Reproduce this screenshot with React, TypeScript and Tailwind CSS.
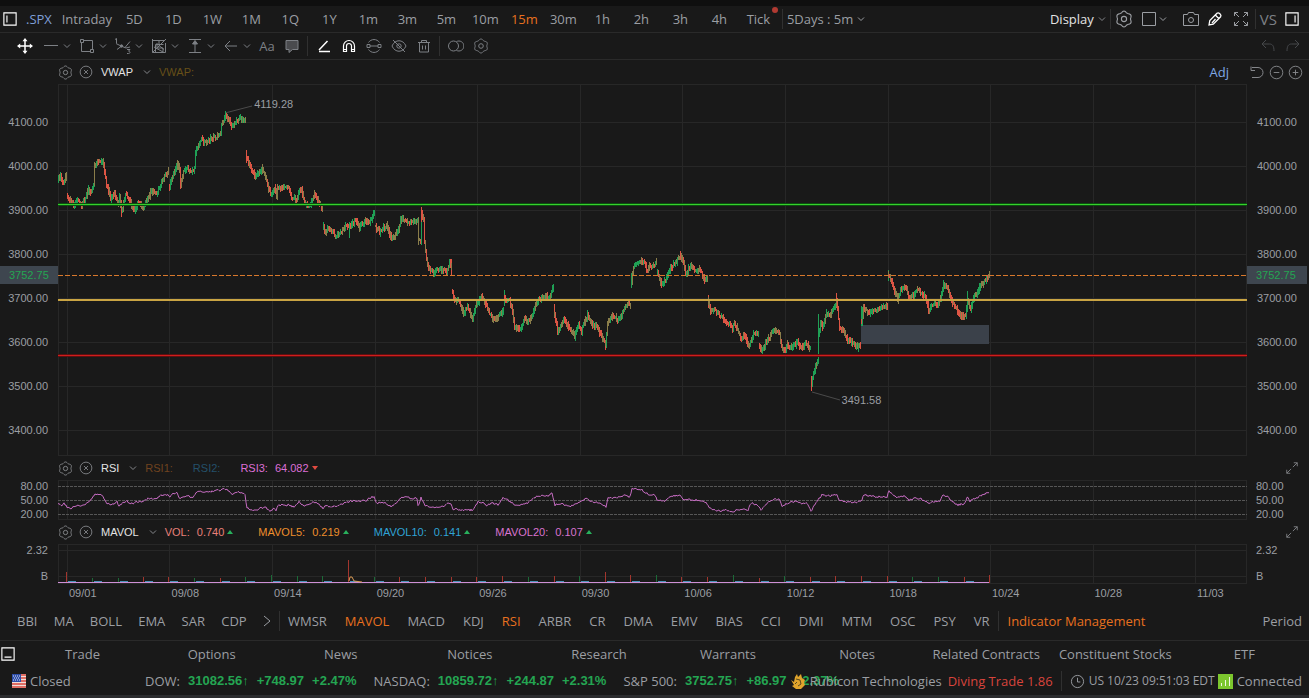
import type { ReactNode } from "react";
import clsx from "clsx";

type Point = [number, number];

const PLOT_LEFT = 58;
const PLOT_WIDTH = 1189;
const GRID_X = [67, 169, 272, 375, 477, 580, 682, 785, 888, 990, 1093, 1195];
const PRICE_TICKS = ["4100.00", "4000.00", "3900.00", "3800.00", "3700.00", "3600.00", "3500.00", "3400.00"];
const DATES = ["09/01", "09/08", "09/14", "09/20", "09/26", "09/30", "10/06", "10/12", "10/18", "10/24", "10/28", "11/03"];
const INTERVALS = ["5D", "1D", "1W", "1M", "1Q", "1Y", "1m", "3m", "5m", "10m", "15m", "30m", "1h", "2h", "3h", "4h"];
const MAIN_INDICATORS = ["BBI", "MA", "BOLL", "EMA", "SAR", "CDP"];
const SUB_INDICATORS = ["WMSR", "MAVOL", "MACD", "KDJ", "RSI", "ARBR", "CR", "DMA", "EMV", "BIAS", "CCI", "DMI", "MTM", "OSC", "PSY", "VR"];
const ACTIVE_INDICATORS = ["MAVOL", "RSI"];
const PAGES = ["Trade", "Options", "News", "Notices", "Research", "Warrants", "Notes", "Related Contracts", "Constituent Stocks", "ETF"];

// One list of closes per trading session, the gaps between lists are overnight gaps
const SESSIONS: Point[][] = [
  [[58, 180], [60, 177], [63, 184], [65, 176], [66, 179]],
  [[67, 197], [70, 202], [73, 206], [77, 200], [81, 205], [85, 198], [88, 189], [91, 191], [93, 186], [94, 166], [97, 161], [102, 161], [106, 185], [110, 199], [114, 194], [117, 202], [119, 197], [121, 212], [125, 195], [128, 197], [131, 205], [134, 211], [137, 203], [143, 208], [146, 201], [151, 191], [156, 193], [160, 185], [165, 175], [168, 172]],
  [[169, 186], [173, 173], [177, 163], [179, 170], [180, 185], [183, 172], [187, 169], [191, 171], [194, 169], [195, 153], [198, 143], [201, 140], [206, 143], [211, 138], [217, 137], [220, 133], [221, 126], [225, 116], [228, 120], [231, 126], [235, 121], [240, 119], [245, 120]],
  [[246, 156], [248, 164], [251, 170], [254, 175], [258, 173], [262, 169], [266, 180], [270, 196], [274, 188], [276, 197], [277, 188], [282, 188], [288, 188], [291, 197], [296, 201], [298, 191], [301, 190], [304, 203], [309, 206], [314, 195], [318, 201], [322, 211]],
  [[323, 227], [324, 234], [327, 227], [330, 231], [335, 235], [341, 233], [345, 225], [349, 227], [355, 220], [359, 227], [364, 222], [369, 223], [372, 215], [374, 212]],
  [[375, 226], [379, 232], [386, 226], [392, 239], [397, 232], [400, 220], [403, 219], [407, 222], [413, 221], [417, 220], [418, 240], [420, 240], [421, 214], [423, 220], [424, 243], [427, 266], [430, 270], [433, 273], [437, 270], [442, 270], [446, 272], [449, 264], [451, 267]],
  [[452, 292], [454, 300], [458, 301], [463, 313], [467, 307], [472, 318], [476, 304], [481, 296], [485, 305], [493, 320], [498, 317], [503, 310]],
  [[504, 297], [506, 302], [509, 299], [512, 312], [514, 326], [520, 329], [524, 320], [529, 322], [533, 310], [538, 299], [543, 297], [548, 298], [553, 286]],
  [[554, 314], [557, 332], [563, 319], [568, 327], [574, 336], [578, 325], [581, 332], [583, 325], [587, 314], [592, 325], [597, 328], [603, 340], [605, 344], [607, 323], [612, 315], [618, 321], [625, 306], [628, 302], [630, 307]],
  [[631, 284], [633, 267], [637, 262], [643, 262], [647, 271], [649, 265], [653, 266], [656, 261]],
  [[657, 273], [661, 284], [665, 280], [670, 268], [675, 263], [680, 255], [683, 263], [685, 275], [690, 266], [695, 270], [699, 270], [704, 279], [707, 276]],
  [[708, 301], [710, 312], [714, 309], [720, 317], [726, 322], [732, 329], [734, 324], [737, 330], [741, 340], [744, 334], [748, 346], [753, 334], [758, 333]],
  [[759, 346], [761, 352], [767, 340], [773, 329], [779, 333], [781, 348], [785, 350], [787, 344], [792, 347], [797, 343], [801, 348], [805, 343], [810, 348]],
  [[811, 384], [814, 369], [817, 360], [818, 333], [820, 322], [822, 328], [826, 314], [830, 315], [833, 308], [836, 303], [837, 310], [839, 328], [843, 330], [847, 340], [852, 343], [856, 347], [860, 345]],
  [[861, 322], [863, 308], [868, 312], [875, 310], [882, 307], [887, 307]],
  [[888, 274], [891, 280], [893, 288], [897, 300], [900, 290], [905, 287], [909, 298], [913, 295], [917, 288], [920, 293], [925, 297], [928, 311], [933, 303], [938, 305], [941, 293], [943, 285], [947, 288], [950, 298], [955, 308], [960, 316], [965, 316], [967, 298], [970, 310], [973, 297], [978, 290], [983, 283], [989, 275]],
];

// Single bars that stick out of their session: x, high, low, color
const SPIKES: [number, number, number, string][] = [
  [121, 200, 217, "#dd5544"], [94, 162, 186, "#8a7d4a"], [246, 150, 163, "#dd5544"], [349, 222, 238, "#1fa055"],
  [418, 217, 245, "#8a7d4a"], [421, 207, 222, "#dd5544"], [451, 259, 275, "#dd5544"], [554, 304, 318, "#dd5544"],
  [605, 340, 350, "#dd5544"], [631, 273, 287, "#1fa055"], [708, 295, 308, "#dd5544"], [811, 376, 391, "#dd5544"],
  [818, 314, 356, "#1fa055"], [836, 293, 308, "#dd5544"], [861, 306, 326, "#1fa055"], [888, 270, 281, "#1fa055"],
  [967, 291, 304, "#1fa055"], [504, 290, 306, "#1fa055"], [862, 307, 326, "#1fa055"], [680, 251, 260, "#dd5544"],
];

const RSI_POINTS: Point[] = [
  [58, 504], [62, 506], [64, 503], [67, 507], [70, 509], [74, 506], [80, 506], [86, 504], [92, 499], [95, 494], [98, 494], [102, 495], [105, 501], [108, 504], [114, 504], [117, 502], [119, 506], [123, 503], [127, 501], [131, 504], [137, 502], [143, 502], [148, 498], [155, 499], [162, 495], [168, 495], [170, 497], [173, 494], [177, 493], [180, 499], [183, 497], [188, 496], [193, 498], [196, 493], [200, 491], [208, 492], [215, 491], [221, 490], [224, 489], [228, 490], [232, 494], [237, 492], [241, 493], [245, 495], [247, 508], [253, 510], [257, 511], [260, 508], [265, 507], [270, 512], [274, 508], [276, 510], [278, 505], [288, 505], [294, 507], [299, 502], [305, 506], [309, 504], [314, 502], [320, 505], [323, 508], [325, 505], [330, 507], [338, 506], [346, 502], [352, 501], [358, 501], [365, 501], [372, 497], [374, 497], [376, 503], [382, 502], [391, 506], [397, 502], [402, 497], [410, 498], [417, 498], [418, 506], [421, 498], [425, 505], [430, 507], [443, 507], [448, 503], [451, 504], [453, 509], [463, 510], [473, 510], [478, 502], [484, 503], [487, 506], [492, 503], [498, 505], [503, 498], [508, 500], [513, 504], [520, 505], [528, 503], [533, 498], [540, 496], [548, 496], [552, 493], [555, 505], [562, 504], [570, 506], [575, 505], [582, 501], [587, 498], [590, 501], [598, 503], [604, 505], [606, 507], [608, 498], [617, 498], [625, 495], [630, 497], [632, 489], [642, 490], [648, 494], [655, 495], [657, 500], [665, 501], [672, 496], [680, 495], [684, 500], [697, 500], [706, 502], [709, 508], [720, 511], [727, 510], [732, 512], [738, 509], [748, 510], [751, 503], [757, 505], [761, 510], [767, 503], [775, 499], [780, 500], [782, 506], [788, 503], [795, 501], [802, 503], [807, 503], [811, 511], [814, 506], [818, 500], [822, 495], [830, 496], [837, 494], [839, 501], [847, 502], [856, 502], [861, 501], [864, 495], [870, 496], [880, 497], [887, 497], [889, 491], [896, 497], [905, 496], [909, 500], [915, 498], [921, 499], [929, 503], [940, 501], [943, 495], [948, 497], [952, 502], [958, 505], [965, 503], [967, 497], [970, 501], [980, 496], [989, 492],
];

const VOLUME_BARS: [number, number, boolean][] = [
  [66, 11, false], [92, 5, true], [118, 5, true], [143, 6, false], [168, 6, false], [194, 5, true], [220, 5, false], [245, 6, true], [271, 8, true], [297, 7, true], [322, 7, true], [348, 23, false], [374, 6, true], [399, 6, false], [425, 6, false], [451, 6, false], [476, 6, false], [502, 7, false], [528, 6, true], [554, 7, false], [579, 7, true], [605, 11, false], [630, 8, false], [656, 8, true], [681, 6, false], [707, 6, false], [733, 8, true], [759, 5, false], [784, 7, true], [810, 6, false], [835, 7, false], [861, 7, false], [887, 7, false], [912, 6, true], [938, 6, true], [964, 6, false], [989, 8, false],
];

const random = (seed: number) => {
  let s = seed;
  return () => {
    s = (s * 1664525 + 1013904223) % 4294967296;
    return s / 4294967296;
  };
};

const valueAt = (points: Point[], x: number) => {
  for (let i = 1; i < points.length; i++) {
    const [x0, y0] = points[i - 1];
    const [x1, y1] = points[i];
    if (x <= x1) return y0 + ((y1 - y0) * (x - x0)) / (x1 - x0);
  }
  return points[points.length - 1][1];
};

const buildCandles = () => {
  const rnd = random(7);
  const paths: Record<string, string> = { "#1fa055": "", "#dd5544": "", "#8a7d4a": "" };
  SESSIONS.forEach((points) => {
    const end = points[points.length - 1][0];
    let prev = points[0][1];
    for (let x = points[0][0]; x <= end; x++) {
      const y = valueAt(points, x) + (rnd() - 0.5) * 3;
      const move = y - prev;
      const top = Math.round(Math.min(y, prev) - 1 - rnd() * 3);
      const bottom = Math.round(Math.max(y, prev) + 1 + rnd() * 3);
      const pick = rnd();
      let color = "#8a7d4a";
      if (pick > 0.35) color = move > 0 ? "#dd5544" : "#1fa055";
      paths[color] += `M${x - PLOT_LEFT + 0.5} ${top - 84}V${bottom - 84}`;
      prev = y;
    }
  });
  SPIKES.forEach(([x, top, bottom, color]) => {
    paths[color] += `M${x - PLOT_LEFT + 0.5} ${top - 84}V${bottom - 84}`;
  });
  return Object.entries(paths);
};

const buildRsi = () => {
  const rnd = random(21);
  let d = "";
  for (let x = 58; x <= 989; x++) {
    const y = valueAt(RSI_POINTS, x) - 480 + (rnd() - 0.5) * 2;
    d += `${d ? "L" : "M"}${x - PLOT_LEFT} ${y.toFixed(1)}`;
  }
  return d;
};

const buildGear = () => {
  let d = "";
  for (let i = 0; i < 72; i++) {
    const a = (i * Math.PI) / 36;
    const r = 6.4 + 0.6 * Math.cos(6 * a);
    d += `${d ? "L" : "M"}${(8 + r * Math.sin(a)).toFixed(2)} ${(8 - r * Math.cos(a)).toFixed(2)}`;
  }
  return `${d}Z`;
};

const CANDLES = buildCandles();
const RSI_PATH = buildRsi();
const GEAR_PATH = buildGear();

interface IconProps {
  children: ReactNode;
  className?: string;
}

const Icon = ({ children, className = "size-4" }: IconProps) => (
  <svg viewBox="0 0 16 16" className={clsx("shrink-0", className)} fill="none" stroke="currentColor" aria-hidden="true">
    {children}
  </svg>
);

const Chevron = () => (
  <svg viewBox="0 0 8 8" className="size-2 shrink-0" fill="none" stroke="currentColor" aria-hidden="true">
    <path d="M1 2.5l3 3 3-3" />
  </svg>
);

const Gear = ({ className }: { className?: string }) => (
  <Icon className={className}>
    <path d={GEAR_PATH} />
    <circle cx="8" cy="8" r="2.3" />
  </Icon>
);

const CircleX = () => (
  <Icon className="size-3.5">
    <circle cx="8" cy="8" r="6.7" />
    <path d="M5.7 5.7l4.6 4.6M10.3 5.7l-4.6 4.6" />
  </Icon>
);

const ExpandDiagonal = () => (
  <Icon className="size-3.5">
    <path d="M9 7l5-5M10 2h4v4M7 9l-5 5M2 10v4h4" />
  </Icon>
);

const Divider = () => <span className="block h-5 w-px shrink-0 bg-[#303030]" />;

const TOOLS: { label: string; icon: ReactNode }[] = [
  { label: "Line", icon: <path d="M1 7.500h14" /> },
  { label: "Shape", icon: <path d="M4.500 2.500h9v9M2.500 4.500v9h9M1.500 1.500h3v3h-3zM11.500 11.500h3v3h-3z" /> },
  {
    label: "Wave",
    icon: (
      <>
        <path d="M0 1.500L1.500.5V5M1 5.500l5 2.500 5 2 4-1M6 8.500l-4 3M10 9.500l5-6M12 11.500h3l-1.500 1.700c2 0 2 2.300 0 2.300H12" />
        <circle cx="6.500" cy="8" r="1.200" fill="currentColor" />
      </>
    ),
  },
  { label: "Fibonacci", icon: <path d="M1.500 1v13.500h13V5M1.500 2.500h12M1.500 14.500L15 1M4.500 6.500h8M4.500 6.500v8M6 5v5h6v4.500M3 9l9 5M8 2.500v5l5 4" /> },
  { label: "Measure", icon: <><path d="M2 1.500h12M2 14.500h12M8 5v9" /><path d="M8 2.500l2.500 3.500h-5z" fill="currentColor" /></> },
  { label: "Arrow", icon: <path d="M14 8H2.500M7 3L2 8l5 5" /> },
];

const TopBar = () => (
  <div className="flex h-[27px] items-center border-b border-[#2a2a2a] pl-[3px] pr-2.5 text-[13px] text-[#9b9ea3]">
    <button type="button" aria-label="Left panel" className="text-white">
      <Icon className="size-3.5">
        <path d="M1 1h14v14H1zM4.500 4v8" strokeWidth="1.300" />
      </Icon>
    </button>
    <a href="#spx" className="ml-[9px] text-[#7f9fd6]">.SPX</a>
    <button type="button" className="ml-[7px] w-14">Intraday</button>
    {INTERVALS.map((item) => (
      <button key={item} type="button" className={clsx("w-[39px]", item === "15m" && "text-[#e8701f]")}>
        {item}
      </button>
    ))}
    <button type="button" className="relative w-[39px]">
      Tick
      <span className="absolute -top-1 right-0 size-1.5 rounded-full bg-[#b03a32]" />
    </button>
    <span className="mx-1"><Divider /></span>
    <button type="button" className="flex items-center gap-1 whitespace-nowrap">
      5Days : 5m
      <Chevron />
    </button>
    <div className="ml-auto flex items-center">
      <button type="button" className="flex items-center gap-1 text-[#e4e4e4]">
        Display
        <span className="text-[#85878b]"><Chevron /></span>
      </button>
      <span className="mx-1"><Divider /></span>
      <button type="button" aria-label="Settings" className="flex w-[18px] justify-center">
        <Gear className="size-[18px]" />
      </button>
      <button type="button" aria-label="Layout" className="ml-2 flex items-center gap-0.5">
        <Icon><path d="M1.500 1.500h13v13h-13z" /></Icon>
        <Chevron />
      </button>
      <button type="button" aria-label="Snapshot" className="ml-4">
        <Icon><path d="M.5 3.500h4l1-2h5l1 2h4v11H.5z" /><circle cx="8" cy="9" r="2.500" /></Icon>
      </button>
      <button type="button" aria-label="Draw" className="ml-2 text-white">
        <Icon><path d="M2 14l.8-4.500L10 2.300c1.500-1.500 5 1.500 3.600 3.500L6.300 13.200zM8.300 4l3.700 3.700M5 12l3.500-4" strokeWidth="1.300" /></Icon>
      </button>
      <button type="button" aria-label="Full screen" className="ml-2.5">
        <Icon><path d="M1.500 5V1.500H5M1.500 1.500L6 6M11 1.500h3.500V5M14.500 1.500L10 6M1.500 11v3.500H5M1.500 14.500L6 10M14.500 11v3.500H11M14.500 14.500L10 10" /></Icon>
      </button>
      <span className="ml-1.5"><Divider /></span>
      <button type="button" className="ml-1 text-[15px] text-[#7d8085]">VS</button>
      <button type="button" aria-label="Right panel" className="ml-2 text-white">
        <Icon className="size-3.5"><path d="M1 1h14v14H1zM11.500 4v8" strokeWidth="1.300" /></Icon>
      </button>
    </div>
  </div>
);

const DrawBar = () => (
  <div className="flex h-[27px] items-center border-b border-[#2a2a2a] pl-[11px] pr-2 text-[#7d8085]">
    <button type="button" aria-label="Move" className="flex w-7 justify-center text-white">
      <Icon>
        <path d="M8 2v12M2 8h12" strokeWidth="1.500" />
        <path d="M8 0l2.500 3.200h-5zM8 16l2.500-3.200h-5zM0 8l3.200-2.500v5zM16 8l-3.200-2.500v5z" fill="currentColor" stroke="none" />
      </Icon>
    </button>
    {TOOLS.map((tool) => (
      <button key={tool.label} type="button" aria-label={tool.label} className="flex w-9 items-center gap-1 pl-1">
        <Icon>{tool.icon}</Icon>
        <Chevron />
      </button>
    ))}
    <button type="button" className="w-6 text-[13px]">Aa</button>
    <button type="button" aria-label="Comment" className="flex w-[25px] justify-center">
      <Icon><path d="M2 2.500h12v9H8.500L5 14.500v-3H2z" fill="#4a4b4e" /></Icon>
    </button>
    <span className="mx-[3px]"><Divider /></span>
    <button type="button" aria-label="Angle" className="flex w-[25px] justify-center text-white">
      <Icon><path d="M11.500 3L3 12M3 13.500h11" strokeWidth="1.500" /></Icon>
    </button>
    <button type="button" aria-label="Magnet" className="flex w-[25px] justify-center text-white">
      <Icon><path d="M2.500 13.500V8a5.500 5.500 0 0 1 11 0v5.500h-3V8a2.500 2.500 0 0 0-5 0v5.500zM2.500 11.500h3M10.500 11.500h3" strokeWidth="1.200" /></Icon>
    </button>
    <button type="button" aria-label="Continuous drawing" className="flex w-[25px] justify-center">
      <Icon><path d="M2.500 4.500a6.600 6.600 0 0 1 11 0M2.500 11.500a6.600 6.600 0 0 0 11 0M1 6.500h3v3H1zM12 6.500h3v3h-3zM4 8h8" /></Icon>
    </button>
    <button type="button" aria-label="Hide drawings" className="flex w-[25px] justify-center">
      <Icon><path d="M1 8c3-7 11-7 14 0-3 7-11 7-14 0zM2 2l12 12" /><circle cx="8" cy="8" r="2.200" /></Icon>
    </button>
    <button type="button" aria-label="Delete" className="flex w-[25px] justify-center">
      <Icon><path d="M2 4.500h12M5.500 4V2.500h5V4M3.500 4.500v9.500h9V4.500M6.500 7.500v4M9.500 7.500v4" /></Icon>
    </button>
    <span className="mx-[3px]"><Divider /></span>
    <button type="button" aria-label="Compare" className="flex w-[25px] justify-center">
      <Icon><circle cx="5.500" cy="8" r="5" /><path d="M8.500 3.600a5 5 0 1 1 0 8.800" /></Icon>
    </button>
    <button type="button" aria-label="Drawing settings" className="flex w-[25px] justify-center">
      <Gear />
    </button>
    <div className="ml-auto flex gap-[9px] text-[#46484b]">
      <button type="button" aria-label="Undo"><Icon><path d="M6 2L2 6l4 4M2 6h7.500c3 0 4.500 2 4.500 7" /></Icon></button>
      <button type="button" aria-label="Redo"><Icon><path d="M10 2l4 4-4 4M14 6H6.500C3.500 6 2 8 2 13" /></Icon></button>
    </div>
  </div>
);

interface PanelHeaderProps {
  name: string;
  children: ReactNode;
  right: ReactNode;
}

const PanelHeader = ({ name, children, right }: PanelHeaderProps) => (
  <div className="flex h-6 items-center pl-[58px] pr-1.5 text-[#85878b]">
    <button type="button" aria-label={`${name} settings`}><Gear className="size-[15px]" /></button>
    <button type="button" aria-label={`Close ${name}`} className="ml-1.5"><CircleX /></button>
    <button type="button" className="mx-2 flex items-center gap-2.5">
      <span className="text-[#e4e4e4]">{name}</span>
      <Chevron />
    </button>
    {children}
    <div className="ml-auto flex items-center">{right}</div>
  </div>
);

const Triangle = ({ down }: { down?: boolean }) => (
  <svg viewBox="0 0 6 4" className={clsx("ml-[3px] h-1 w-1.5", down ? "fill-[#e04a40]" : "fill-[#28b05c]")} aria-hidden="true">
    <path d={down ? "M0 0h6l-3 4z" : "M0 4h6l-3-4z"} />
  </svg>
);

const Reading = ({ label, value, down, className }: { label: string; value: string; down?: boolean; className: string }) => (
  <span className={clsx("mr-[25px] flex items-center", className)}>
    {label}
    <span className="ml-[7px]">{value}</span>
    <Triangle down={down} />
  </span>
);

const Plot = ({ height, children }: { height: number; children: ReactNode }) => (
  <svg viewBox={`0 0 ${PLOT_WIDTH} ${height}`} preserveAspectRatio="none" className="block h-full w-full" fill="none" aria-hidden="true">
    <g stroke="#272727" shapeRendering="crispEdges">
      <rect x="0.5" y="0.5" width={PLOT_WIDTH - 1} height={height - 1} />
      {GRID_X.map((x) => (
        <path key={x} d={`M${x - PLOT_LEFT + 0.5} 0V${height}`} />
      ))}
    </g>
    {children}
  </svg>
);

const PriceAxis = ({ right }: { right?: boolean }) => (
  <div className={clsx("relative shrink-0 pt-4", right ? "w-[62px] pl-2.5" : "w-[58px] pr-2.5 text-right")}>
    {PRICE_TICKS.map((tick) => (
      <div key={tick} className="flex h-11 flex-col justify-center">{tick}</div>
    ))}
    <div className={clsx("absolute top-[182px] flex h-[18px] items-center bg-[#3e464f] pl-[9px] text-[#24a552]", right ? "left-0 w-[60px]" : "inset-x-0")}>
      3752.75
    </div>
  </div>
);

const PriceChart = () => (
  <div className="flex h-[372px]">
    <PriceAxis />
    <div className="relative min-w-0 flex-1">
      <Plot height={372}>
        <g stroke="#272727" shapeRendering="crispEdges">
          {PRICE_TICKS.map((tick, i) => (
            <path key={tick} d={`M0 ${38.5 + i * 44}H${PLOT_WIDTH}`} />
          ))}
        </g>
        <path d="M167 29L194 22M754 308L782 316" stroke="#4a4a4a" />
        <rect x="803" y="241" width="128" height="19" fill="#3b414a" />
        <g shapeRendering="crispEdges">
          {CANDLES.map(([color, d]) => (
            <path key={color} d={d} stroke={color} />
          ))}
          <path d={`M0 191.500H${PLOT_WIDTH}`} stroke="#d8782c" strokeDasharray="5 2" />
          <path d={`M0 120.500H${PLOT_WIDTH}`} stroke="#0d4d10" strokeWidth="3" />
          <path d={`M0 120.500H${PLOT_WIDTH}`} stroke="#35d02c" />
          <path d={`M0 216H${PLOT_WIDTH}`} stroke="#c9a443" strokeWidth="2" />
          <path d={`M0 271.500H${PLOT_WIDTH}`} stroke="#5c1010" strokeWidth="3" />
          <path d={`M0 271.500H${PLOT_WIDTH}`} stroke="#cf1d1d" />
        </g>
      </Plot>
      <span className="absolute left-[16.5%] top-3 leading-4">4119.28</span>
      <span className="absolute left-[65.9%] top-[308px] leading-4">3491.58</span>
    </div>
    <PriceAxis right />
  </div>
);

const SideAxis = ({ labels, right }: { labels: string[]; right?: boolean }) => (
  <div className={clsx("-mt-px flex h-10 shrink-0 flex-col justify-between leading-[14px]", right ? "w-[62px] pl-[9px]" : "w-[58px] items-end pr-2.5")}>
    {labels.map((label) => (
      <span key={label}>{label}</span>
    ))}
  </div>
);

const RsiChart = () => (
  <div className="flex h-10">
    <SideAxis labels={["80.00", "50.00", "20.00"]} />
    <div className="min-w-0 flex-1">
      <Plot height={40}>
        <path d={`M0 6.500H${PLOT_WIDTH}M0 20.500H${PLOT_WIDTH}M0 34.500H${PLOT_WIDTH}`} stroke="#565656" strokeDasharray="3 1" />
        <path d={RSI_PATH} stroke="#c46bc0" />
      </Plot>
    </div>
    <SideAxis labels={["80.00", "50.00", "20.00"]} right />
  </div>
);

const VolumeChart = () => (
  <div className="flex h-10">
    <SideAxis labels={["2.32", "B"]} />
    <div className="min-w-0 flex-1">
      <Plot height={40}>
        <path d={`M0 6.500H${PLOT_WIDTH}M0 32.500H${PLOT_WIDTH}`} stroke="#272727" />
        <g shapeRendering="crispEdges">
          {VOLUME_BARS.map(([x, h, up]) => (
            <path key={x} d={`M${x - PLOT_LEFT + 0.5} 39V${39 - h}`} stroke={up ? "#1c6b38" : "#a3362e"} />
          ))}
          {VOLUME_BARS.slice(0, -1).map(([x]) => (
            <path key={x} d={`M${x - PLOT_LEFT + 2} 37.500h8`} stroke="#4b93b8" />
          ))}
          <path d="M0 38.500H931" stroke="#cf8fd6" />
        </g>
        <path d="M291 37l1-4h2l2 4 8 1" stroke="#d79a55" />
      </Plot>
    </div>
    <SideAxis labels={["2.32", "B"]} right />
  </div>
);

const DateAxis = () => (
  <div className="flex h-[18px] items-center pl-[69px] pr-[62px]">
    {DATES.map((date, i) => (
      <span key={date} className={i === DATES.length - 1 ? "w-[50px]" : "flex-1"}>{date}</span>
    ))}
  </div>
);

const IndicatorBar = () => (
  <div className="flex h-[39px] items-center border-b border-[#2a2a2a] pl-[17px] pr-[7px] text-[13px]">
    <div className="flex w-[254px] items-center justify-between">
      {MAIN_INDICATORS.map((item) => (
        <button key={item} type="button">{item}</button>
      ))}
      <button type="button" aria-label="More indicators">
        <svg viewBox="0 0 8 12" className="h-3 w-2" fill="none" stroke="currentColor" aria-hidden="true"><path d="M1 1l6 5-6 5" /></svg>
      </button>
    </div>
    <span className="mx-2"><Divider /></span>
    <div className="mr-2 flex flex-1 items-center justify-between">
      {SUB_INDICATORS.map((item) => (
        <button key={item} type="button" className={clsx(ACTIVE_INDICATORS.includes(item) && "text-[#e8701f]")}>
          {item}
        </button>
      ))}
    </div>
    <Divider />
    <button type="button" className="ml-[9px] w-[134px] whitespace-nowrap text-left text-[#e8701f]">Indicator Management</button>
    <button type="button" className="ml-[121px]">Period</button>
  </div>
);

const PageNav = () => (
  <nav className="flex h-[26px] items-center text-[13px]">
    <button type="button" aria-label="Bottom panel" className="w-[18px] shrink-0 text-white">
      <Icon className="ml-px size-3.5"><path d="M1 1h14v14H1zM4 11.500h8" strokeWidth="1.300" /></Icon>
    </button>
    {PAGES.map((page) => (
      <a key={page} href={`#${page.toLowerCase().replace(" ", "-")}`} className="flex-1 basis-0 whitespace-nowrap text-center">{page}</a>
    ))}
  </nav>
);

const Quote = ({ name, price, change, percent }: { name: string; price: string; change: string; percent: string }) => (
  <span className="flex items-center">
    <span>{name}:</span>
    <span className="ml-2 flex gap-2 font-['Liberation_Sans',sans-serif] font-bold text-[#24a552]">
      <span>{price}↑</span>
      <span>{change}</span>
      <span>{percent}</span>
    </span>
  </span>
);

const StatusBar = () => (
  <footer className="flex h-7 items-center whitespace-nowrap pl-3 pr-[7px] text-[13px]">
    <div className="flex min-w-0 flex-1 items-center">
      <svg viewBox="0 0 14 14" className="mr-1 size-3.5 shrink-0" aria-hidden="true">
        <path d="M0 0h14v14H0z" fill="#f0dcd8" />
        <path d="M0 1h14M0 4h14M0 7h14M0 10h14M0 13h14" stroke="#d8483c" strokeWidth="1.600" />
        <path d="M0 0h9v8H0z" fill="#2d4da8" />
        <path d="M1 2h7M2 4h6M1 6h7" stroke="#dfe6f5" strokeDasharray="1 1" />
      </svg>
      <span className="w-[115px] shrink-0">Closed</span>
      <div className="flex gap-[17px]">
        <Quote name="DOW" price="31082.56" change="+748.97" percent="+2.47%" />
        <Quote name="NASDAQ" price="10859.72" change="+244.87" percent="+2.31%" />
        <Quote name="S&P 500" price="3752.75" change="+86.97" percent="+2.37%" />
      </div>
    </div>
    <div className="flex shrink-0 items-center">
      <svg viewBox="0 0 16 16" className="mr-1 size-4" aria-hidden="true">
        <path d="M1 7l3 2 1-5 2-3 1 3 3-3 1 4 3 2-1 3 1 2-4 4H6l-4-3 2-1z" fill="#e0a42c" />
        <path d="M6 6l4 1 1 4-3 2M5 11l2-2" fill="none" stroke="#5b4a1c" />
      </svg>
      <span>Rubicon Technologies</span>
      <span className="ml-1.5 text-[#d8443c]">Diving Trade 1.86</span>
      <span className="mx-2"><Divider /></span>
      <Icon className="size-[15px]"><circle cx="8" cy="8" r="6.500" /><path d="M8 4v4.500h3" /></Icon>
      <time className="ml-1 text-xs">US 10/23 09:51:03 EDT</time>
      <svg viewBox="0 0 15 15" className="ml-[3px] mr-1 size-[15px]" aria-hidden="true">
        <path d="M0 0h15v15H0z" fill="#7cc62e" />
        <path d="M3.500 12V9M7.500 12V6M11.500 12V3" stroke="#eef8e0" />
      </svg>
      <span>Connected</span>
    </div>
  </footer>
);

export default function App() {
  return (
    <div className="flex min-h-screen flex-col bg-[#191919] font-['Open_Sans',sans-serif] leading-4 text-[#9b9ea3]">
      <div className="h-1.5 bg-[#0f0f0f]" />
      <TopBar />
      <DrawBar />
      <main className="font-['Liberation_Sans',sans-serif] text-[11px]">
        <PanelHeader
          name="VWAP"
          right={
            <>
              <button type="button" className="mr-5 font-['Open_Sans',sans-serif] text-[13px] text-[#7fa8e6]">Adj</button>
              <button type="button" aria-label="Reset zoom" className="mr-1"><Icon><path d="M2 2.500v4h4M3 3.500h6a5 5 0 0 1 0 10H3" /></Icon></button>
              <button type="button" aria-label="Zoom out" className="mr-1"><Icon className="size-[15px]"><circle cx="8" cy="8" r="6.700" /><path d="M5 8h6" /></Icon></button>
              <button type="button" aria-label="Zoom in"><Icon className="size-[15px]"><circle cx="8" cy="8" r="6.700" /><path d="M5 8h6M8 5v6" /></Icon></button>
            </>
          }
        >
          <span className="text-[#675018]">VWAP:</span>
        </PanelHeader>
        <PriceChart />
        <PanelHeader name="RSI" right={<button type="button" aria-label="Expand RSI" className="mr-1"><ExpandDiagonal /></button>}>
          <span className="mr-5 text-[#70431f]">RSI1:</span>
          <span className="mr-5 text-[#24506a]">RSI2:</span>
          <Reading label="RSI3:" value="64.082" down className="text-[#dc6fd6]" />
        </PanelHeader>
        <RsiChart />
        <PanelHeader name="MAVOL" right={<button type="button" aria-label="Expand MAVOL" className="mr-1"><ExpandDiagonal /></button>}>
          <Reading label="VOL:" value="0.740" className="text-[#e8807a]" />
          <Reading label="MAVOL5:" value="0.219" className="text-[#ee8f2c]" />
          <Reading label="MAVOL10:" value="0.141" className="text-[#2fa3d6]" />
          <Reading label="MAVOL20:" value="0.107" className="text-[#d873cf]" />
        </PanelHeader>
        <VolumeChart />
        <DateAxis />
      </main>
      <IndicatorBar />
      <PageNav />
      <StatusBar />
      <div className="min-h-[3px] flex-1 bg-[#2b2c2e]" />
    </div>
  );
}
